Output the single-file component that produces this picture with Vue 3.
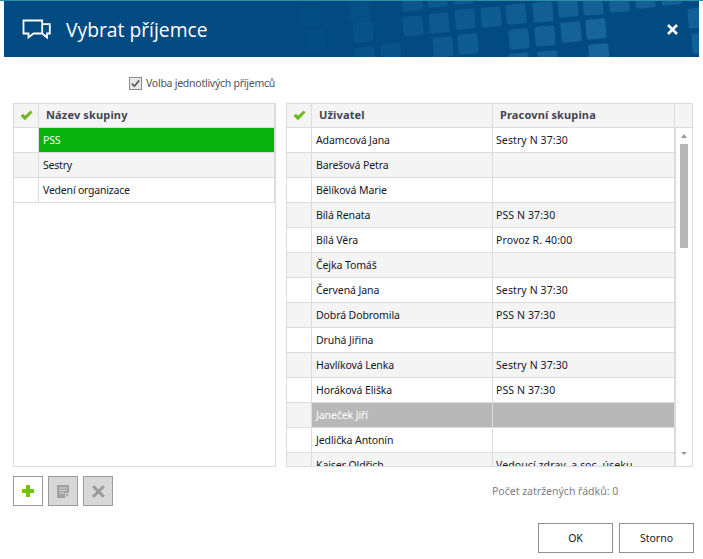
<script setup>
const squares = [
  [350,2,.25],[353,22,.3],[355,47,.3],[381,44,.35],[403,16,.45],[429,13,.55],[455,9,.6],[481,7,.65],[506,4,.7],
  [433,37,.6],[458,34,.65],[509,29,.75],[402,-9,.45],[427,-13,.55],[453,-16,.6],[509,53,.75],
  [533,2,.8],[558,-3,.85],[583,-5,.85],[609,-8,.85],[635,-12,.85],[661,-15,.85],[687,-19,.85],
  [535,26,.85],[561,22,.9],[586,19,1],[589,44,1],[538,51,.85],[688,8,.85],[692,33,.85],
  [300,6,.12],[305,30,.12]
]
const groups = [
  { name: 'PSS', selected: true },
  { name: 'Sestry' },
  { name: 'Vedení organizace' }
]
const users = [
  ['Adamcová Jana', 'Sestry N 37:30'],
  ['Barešová Petra', ''],
  ['Bělíková Marie', ''],
  ['Bílá Renata', 'PSS N 37:30'],
  ['Bílá Věra', 'Provoz R. 40:00'],
  ['Čejka Tomáš', ''],
  ['Červená Jana', 'Sestry N 37:30'],
  ['Dobrá Dobromila', 'PSS N 37:30'],
  ['Druhá Jiřina', ''],
  ['Havlíková Lenka', 'Sestry N 37:30'],
  ['Horáková Eliška', 'PSS N 37:30'],
  ['Janeček Jiří', '', true],
  ['Jedlička Antonín', ''],
  ['Kaiser Oldřich', 'Vedoucí zdrav. a soc. úseku']
]
</script>

<template>
  <div class="dialog">
    <header class="title-bar">
      <svg class="pattern" width="695" height="56" viewBox="4 1 695 56">
        <g v-for="(s, i) in squares" :key="i" :transform="`rotate(-5 ${s[0] + 10} ${s[1] + 10})`">
          <rect :x="s[0]" :y="s[1]" width="20" height="20" rx="2" fill="#2a80b4" :fill-opacity="s[2] * 0.5" />
        </g>
      </svg>
      <svg class="chat" width="30" height="22" viewBox="22 19 30 22" fill="none" stroke="#fff" stroke-width="1.8">
        <path d="M23.5 21.5H42.2V34.5H33.5L28.5 38.5V34.5H23.5Z" />
        <path d="M43 25.2H49.8V34.5H47V38.5L42.5 34.8" />
      </svg>
      <h1 class="title">Vybrat příjemce</h1>
      <svg class="close" width="11" height="11" viewBox="0 0 11 11" stroke="#fff" stroke-width="2.6">
        <path d="M1 1L10 10M10 1L1 10" />
      </svg>
    </header>

    <main class="content">
      <label class="pick">
        <svg width="13" height="13" viewBox="0 0 13 13">
          <rect x=".5" y=".5" width="12" height="12" fill="#e8e8e8" stroke="#8c8c8c" />
          <path d="M2.8 6.6L5.4 9.2L10.2 3.4" fill="none" stroke="#5f5f5f" stroke-width="1.8" />
        </svg>
        <span>Volba jednotlivých příjemců</span>
      </label>

      <div class="columns">
        <section class="table">
          <div class="row head groups-row">
            <div class="cell check">
              <svg width="13" height="11" viewBox="0 0 13 11"><path d="M0.5 6L3 3.8L5 5.8L10.6 .6L12.5 2.4L5 10.2Z" fill="#6db91e" /></svg>
            </div>
            <div class="cell head-text">Název skupiny</div>
          </div>
          <div
            v-for="(g, i) in groups"
            :key="g.name"
            class="row groups-row"
            :class="{ alt: i % 2 === 1 }"
          >
            <div class="cell check"></div>
            <div class="cell group-name" :class="{ picked: g.selected }">{{ g.name }}</div>
          </div>
        </section>

        <section class="table">
          <div class="row head users-row">
            <div class="cell check">
              <svg width="13" height="11" viewBox="0 0 13 11"><path d="M0.5 6L3 3.8L5 5.8L10.6 .6L12.5 2.4L5 10.2Z" fill="#6db91e" /></svg>
            </div>
            <div class="cell head-text">Uživatel</div>
            <div class="cell head-text wide">Pracovní skupina</div>
            <div class="cell"></div>
          </div>
          <div class="scroll-body">
            <div class="rows">
              <div
                v-for="(u, i) in users"
                :key="u[0]"
                class="row user-data"
                :class="{ alt: i % 2 === 1 }"
              >
                <div class="cell check"></div>
                <div class="cell" :class="{ marked: u[2] }">{{ u[0] }}</div>
                <div class="cell tight" :class="{ marked: u[2] }">{{ u[1] }}</div>
              </div>
            </div>
            <div class="scrollbar">
              <i class="arrow up"></i>
              <i class="thumb"></i>
              <i class="arrow down"></i>
            </div>
          </div>
        </section>
      </div>

      <div class="tools">
        <div class="tool-buttons">
          <button class="tool">
            <svg width="12" height="12" viewBox="0 0 12 12"><path d="M4 0H8V4H12V8H8V12H4V8H0V4H4Z" fill="#70c400" /></svg>
          </button>
          <button class="tool off">
            <svg width="12" height="13" viewBox="0 0 12 13">
              <path d="M0 0H12V8H8V13H0Z" fill="#a0a0a0" />
              <path d="M2 3H10M2 5.5H10M2 8H7" stroke="#d8d8d8" />
              <path d="M9 9H12L9 12.5Z" fill="#a0a0a0" />
            </svg>
          </button>
          <button class="tool off">
            <svg width="13" height="13" viewBox="0 0 13 13"><path d="M1.2 1.2L11.8 11.8M11.8 1.2L1.2 11.8" stroke="#9a9a9a" stroke-width="3" /></svg>
          </button>
        </div>
        <div class="count">Počet zatržených řádků: 0</div>
      </div>

      <footer class="actions">
        <button class="action">OK</button>
        <button class="action">Storno</button>
      </footer>
    </main>
  </div>
</template>

<style>
html, body { margin: 0; background: #fff; }
</style>

<style scoped>
.dialog {
  width: 703px;
  height: 559px;
  box-sizing: border-box;
  border-top: 1px solid #2c8fa6;
  overflow: hidden;
  background: #fff;
  font: 10.5px "Noto Sans", "Open Sans", sans-serif;
  letter-spacing: -0.1px;
  color: #16162a;
}
.title-bar {
  position: relative;
  height: 56px;
  margin: 0 4px;
  display: flex;
  align-items: center;
  background: #024a82;
  overflow: hidden;
}
.pattern { position: absolute; left: 0; top: 0; }
.chat { position: relative; margin: 0 0 0 18px; }
.title {
  position: relative;
  margin: 0 0 0 14px;
  font: 400 19.3px "Open Sans", "Noto Sans", sans-serif;
  letter-spacing: 0;
  color: #fff;
}
.close { position: absolute; left: 663px; top: 23px; }
.content { padding: 19px 9px 0 13px; }
.pick {
  display: flex;
  align-items: center;
  gap: 4px;
  height: 14px;
  padding-left: 116px;
  letter-spacing: -0.25px;
  color: #50505c;
}
.columns {
  display: grid;
  grid-template-columns: 263px 407px;
  gap: 10px;
  margin-top: 13px;
}
.table {
  box-sizing: border-box;
  height: 364px;
  border: 1px solid #dcdcdc;
  overflow: hidden;
}
.row {
  display: grid;
  height: 25px;
  box-sizing: border-box;
  border-bottom: 1px solid #dcdcdc;
}
.row.head { height: 24px; background: #f4f4f4; }
.groups-row { grid-template-columns: 25px 1fr; border-right: 1px solid #dcdcdc; }
.users-row { grid-template-columns: 25px 181px 182px 1fr; }
.user-data { grid-template-columns: 25px 181px 1fr; border-right: 2px solid #dcdcdc; }
.alt { background: #f4f4f4; }
.cell {
  display: flex;
  align-items: center;
  box-sizing: border-box;
  min-width: 0;
  padding: 0 0 1px 4px;
  white-space: nowrap;
  border-right: 1px solid #dcdcdc;
}
.cell:last-child { border-right: 0; }
.cell.check { justify-content: center; padding: 0; }
.cell.tight { padding-left: 3px; letter-spacing: 0.1px; }
.cell.group-name { letter-spacing: -0.2px; }
.cell.head-text { padding: 0 0 2px 7px; font-size: 11px; letter-spacing: 0.15px; font-weight: 700; color: #444454; }
.picked { background: #07b20c; color: #fff; }
.marked { background: #b8b8b8; color: #fff; border-right-color: #dcdcdc; }
.scroll-body {
  display: grid;
  grid-template-columns: 389px 1fr;
  height: 338px;
  overflow: hidden;
}
.rows { height: 338px; overflow: hidden; }
.scrollbar {
  display: flex;
  flex-direction: column;
  align-items: center;
}
.thumb { width: 8px; height: 104px; background: #b8b8b8; margin-top: 6px; }
.arrow { width: 0; height: 0; border-left: 3px solid transparent; border-right: 3px solid transparent; }
.arrow.up { margin-top: 6px; border-bottom: 4px solid #9a9a9a; }
.arrow.down { margin-top: 204px; border-top: 3px solid #9a9a9a; }
.tools {
  display: grid;
  grid-template-columns: 263px 407px;
  gap: 10px;
  margin-top: 9px;
  height: 30px;
}
.tool-buttons { display: flex; gap: 5px; }
.tool {
  width: 30px;
  height: 30px;
  box-sizing: border-box;
  padding: 0;
  display: flex;
  align-items: center;
  justify-content: center;
  background: #fff;
  border: 1px solid #9b9b9b;
}
.tool.off { background: #d8d8d8; }
.count {
  padding-left: 206px;
  line-height: 30px;
  letter-spacing: 0;
  color: #7b808c;
}
.actions {
  display: flex;
  justify-content: flex-end;
  gap: 6px;
  margin-top: 17px;
}
.action {
  width: 75px;
  height: 30px;
  padding: 0;
  background: #fff;
  border: 1px solid #8f8f8f;
  font: inherit;
  color: #16162a;
}
</style>
